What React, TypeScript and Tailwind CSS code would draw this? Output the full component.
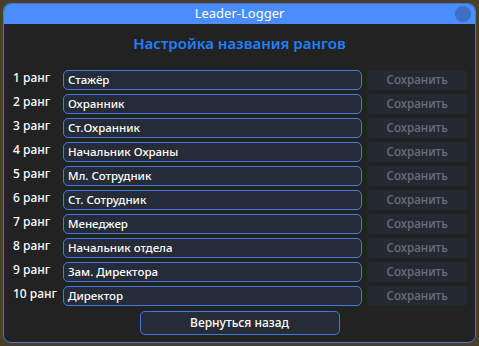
import React from "react";

const ranks = [
  "Стажёр",
  "Охранник",
  "Ст.Охранник",
  "Начальник Охраны",
  "Мл. Сотрудник",
  "Ст. Сотрудник",
  "Менеджер",
  "Начальник отдела",
  "Зам. Директора",
  "Директор",
];

export default function App() {
  return (
    <div
      className="w-[479px] h-[346px] bg-[#4a3f2a] pt-[3px] pl-[3px] overflow-hidden"
      style={{ fontFamily: '"Noto Sans", "Open Sans", sans-serif' }}
    >
      <div className="w-[473px] h-[340px] rounded-[8px] border border-[#3f78d4] bg-[#222222] overflow-hidden flex flex-col">
        <div className="h-[20px] bg-[#4b8dff] relative flex items-center justify-center text-[13px] text-white">
          Leader-Logger
          <div className="absolute right-[4px] top-[2px] w-[16px] h-[16px] rounded-full bg-[#3d6fc2]" />
        </div>
        <div className="flex-1 flex flex-col px-[8px]">
          <div className="text-center text-[#1f80ff] text-[15px] font-semibold mt-[8px] leading-[22px]">
            Настройка названия рангов
          </div>
          <div className="mt-[16px] flex flex-col gap-[4px]">
            {ranks.map((r, i) => (
              <div key={i} className="flex items-center h-[20px]">
                <div className="w-[51px] text-[12px] font-medium text-white pl-[1px] -mt-[4px]">{i + 1} ранг</div>
                <div className="w-[300px] h-[20px] rounded-[5px] border border-[#3e7de0] bg-[#262b38] text-white text-[11.5px] font-medium flex items-center pl-[4px]">
                  {r}
                </div>
                <div className="ml-[5px] w-[100px] h-[20px] rounded-[4px] bg-[#252932] text-[#697080] text-[11.7px] font-medium flex items-center justify-center">
                  Сохранить
                </div>
              </div>
            ))}
          </div>
          <div className="flex justify-center mt-[5px]">
            <div className="w-[200px] h-[24px] rounded-[5px] border border-[#3e7de0] bg-[#262b38] text-white text-[12px] font-medium flex items-center justify-center">
              Вернуться назад
            </div>
          </div>
        </div>
      </div>
    </div>
  );
}
